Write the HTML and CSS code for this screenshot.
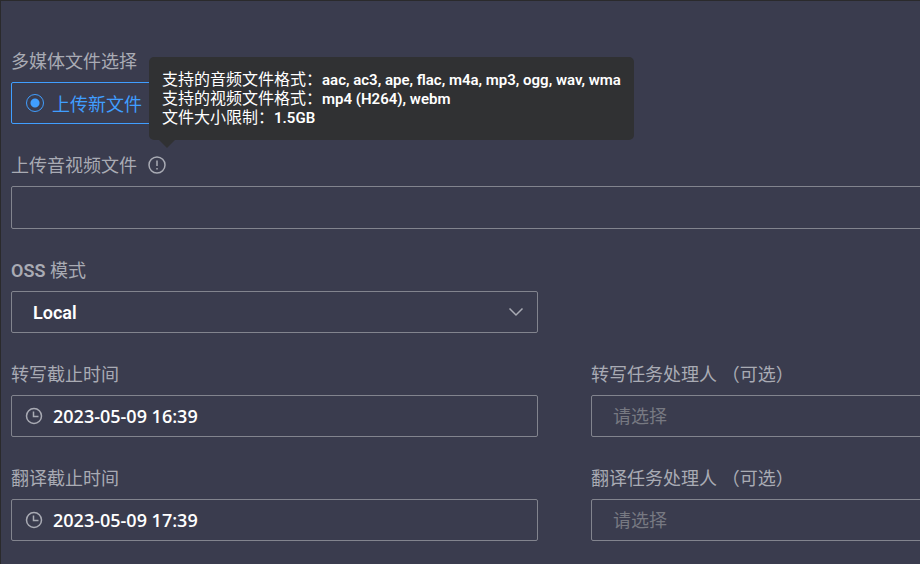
FILE: index.html
```html
<!DOCTYPE html>
<html lang="zh-Hans">
  <head>
    <meta charset="UTF-8" />
    <meta name="viewport" content="width=device-width, initial-scale=1.0" />
    <title>上传音视频文件</title>
    <link rel="stylesheet" href="styles.css">
  </head>
  <body>
    <main class="panel">
      <form class="upload-form">
        <fieldset class="form-item full">
          <legend class="label">多媒体文件选择</legend>
          <label class="radio-card">
            <input type="radio" name="source" value="new" checked />
            <span>上传新文件</span>
          </label>
        </fieldset>

        <div class="form-item full">
          <div class="label-row">
            <label class="label" for="media">上传音视频文件</label>
            <button class="info-btn" type="button" aria-label="文件格式说明" aria-describedby="format-tip">
              <svg viewBox="0 0 18 18" width="18" height="18">
                <circle cx="9" cy="9" r="8" />
                <path d="M9 4.5v5.5M9 12v1.6" />
              </svg>
            </button>
            <!-- 格式提示 -->
            <div class="tooltip" id="format-tip" role="tooltip">
              <p>支持的音频文件格式：<b>aac, ac3, ape, flac, m4a, mp3, ogg, wav, wma</b></p>
              <p>支持的视频文件格式：<b>mp4 (H264), webm</b></p>
              <p>文件大小限制：<b>1.5GB</b></p>
            </div>
          </div>
          <input class="field file-field" id="media" type="file" />
        </div>

        <div class="form-item first-col">
          <label class="label" for="oss"><b>OSS</b> 模式</label>
          <div class="field">
            <select id="oss">
              <option>Local</option>
            </select>
            <svg class="arrow" viewBox="0 0 16 16" width="16" height="16">
              <path d="M1.5 4.5L8 11l6.5-6.5" />
            </svg>
          </div>
        </div>

        <!-- 转写 -->
        <div class="form-item first-col">
          <label class="label" for="transcribe-time">转写截止时间</label>
          <div class="field with-icon">
            <svg viewBox="0 0 18 18" width="18" height="18">
              <circle cx="9" cy="9" r="7.5" />
              <path d="M8.5 4.5v5h5" />
            </svg>
            <input id="transcribe-time" type="text" value="2023-05-09 16:39" />
          </div>
        </div>
        <div class="form-item">
          <label class="label" for="transcribe-user">转写任务处理人 （可选）</label>
          <div class="field">
            <select class="empty" id="transcribe-user">
              <option value="">请选择</option>
            </select>
          </div>
        </div>

        <!-- 翻译 -->
        <div class="form-item first-col">
          <label class="label" for="translate-time">翻译截止时间</label>
          <div class="field with-icon">
            <svg viewBox="0 0 18 18" width="18" height="18">
              <circle cx="9" cy="9" r="7.5" />
              <path d="M8.5 4.5v5h5" />
            </svg>
            <input id="translate-time" type="text" value="2023-05-09 17:39" />
          </div>
        </div>
        <div class="form-item">
          <label class="label" for="translate-user">翻译任务处理人 （可选）</label>
          <div class="field">
            <select class="empty" id="translate-user">
              <option value="">请选择</option>
            </select>
          </div>
        </div>
      </form>
    </main>
  </body>
</html>
```

FILE: styles.css
```css
:root {
  --bg: #3a3c4e;
  --line: #82848e;
  --text-label: #a9abb4;
  --primary: #409eff;
  --tip-bg: #303133;
}

* {
  margin: 0;
  padding: 0;
  box-sizing: border-box;
}

body {
  background: var(--bg);
  color: var(--text-label);
  font-family: "Open Sans", "Noto Sans CJK SC", sans-serif;
  font-size: 18px;
}

b {
  font-family: Roboto, sans-serif;
  font-weight: 600;
  line-height: 1;
}

svg {
  flex: none;
  fill: none;
  stroke: var(--text-label);
  stroke-width: 1.5;
}

.panel {
  min-height: 100vh;
  padding: 47px 10px 20px;
  border-top: 1px solid #2a2a2c;
  border-left: 1px solid #2a2a2c;
  overflow: hidden;
}

/* 表单比可视区域宽，右侧超出部分隐藏 */
.upload-form {
  display: grid;
  grid-template-columns: 1fr 1fr;
  gap: 28px 53px;
  width: calc(100% + 208px);
}

.form-item {
  min-width: 0;
  border: none;
}

.full {
  grid-column: 1 / -1;
}

.first-col {
  grid-column: 1;
}

.label {
  display: block;
  line-height: 26px;
  margin-bottom: 8px;
}

.label-row {
  position: relative;
  display: flex;
  gap: 11px;
}

.radio-card {
  display: inline-flex;
  align-items: center;
  gap: 8px;
  width: 170px;
  height: 42px;
  padding: 0 14px;
  border: 1px solid var(--primary);
  border-radius: 2px;
  color: var(--primary);
  vertical-align: top;
}

.radio-card input {
  appearance: none;
  width: 18px;
  height: 18px;
  border: 1px solid var(--primary);
  border-radius: 50%;
  background: radial-gradient(circle, var(--primary) 4px, transparent 5px);
}

.info-btn {
  display: flex;
  align-items: center;
  height: 26px;
  border: none;
  background: none;
  cursor: pointer;
}

.tooltip {
  position: absolute;
  left: 138px;
  bottom: 46px;
  padding: 13px;
  border-radius: 5px;
  background: var(--tip-bg);
  color: #fff;
  font-family: Roboto, "Noto Sans CJK SC", sans-serif;
  font-size: 16px;
  line-height: 19px;
  white-space: nowrap;
}

.tooltip b {
  font-size: 15px;
}

.tooltip::after {
  content: "";
  position: absolute;
  top: 100%;
  left: 10px;
  border: 8px solid transparent;
  border-top-color: var(--tip-bg);
  border-bottom: none;
}

.field {
  display: flex;
  align-items: center;
  width: 100%;
  height: 42px;
  border: 1px solid var(--line);
  border-radius: 2px;
}

.field input,
.field select {
  flex: 1;
  min-width: 0;
  height: 100%;
  border: none;
  outline: none;
  appearance: none;
  background: none;
  color: #fff;
  font: inherit;
  font-weight: 600;
}

.field select {
  padding-left: 21px;
  font-family: Roboto, "Noto Sans CJK SC", sans-serif;
}

.field select.empty {
  color: #777982;
  font-weight: 400;
}

.file-field {
  height: 43px;
  color: transparent;
}

.file-field::file-selector-button {
  display: none;
}

.with-icon {
  gap: 10px;
  padding: 0 13px;
}

.arrow {
  margin-right: 13px;
}
```
